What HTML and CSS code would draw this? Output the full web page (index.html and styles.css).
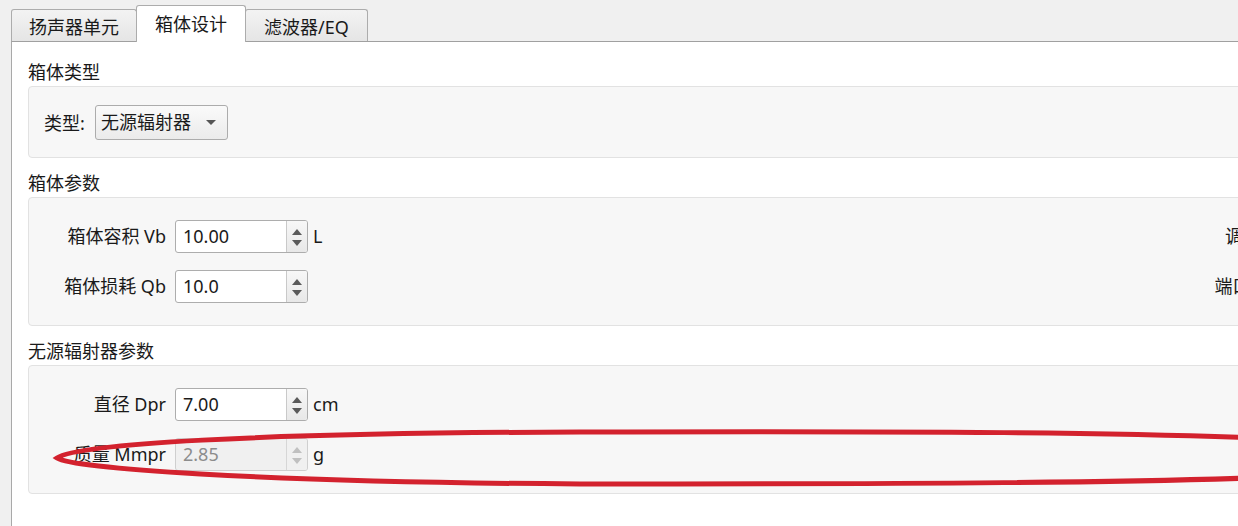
FILE: index.html
```html
<!DOCTYPE html>
<html lang="zh">
<head>
<meta charset="utf-8">
<title>箱体设计</title>
<link rel="stylesheet" href="styles.css">
</head>
<body>
<div class="app">
  <div class="tabs">
    <div class="tab">扬声器单元</div>
    <div class="tab active">箱体设计</div>
    <div class="tab wide">滤波器/EQ</div>
  </div>
  <div class="panel">
    <section class="sec">
      <div class="sec-title">箱体类型</div>
      <div class="group type-group">
        <span class="type-label">类型:</span>
        <div class="combo"><span class="combo-text">无源辐射器</span><span class="caret"></span></div>
      </div>
    </section>
    <section class="sec">
      <div class="sec-title">箱体参数</div>
      <div class="group form">
        <span class="lbl">箱体容积 Vb</span>
        <div class="spin"><span class="val">10.00</span><span class="btns"><i class="up"></i><i class="dn"></i></span></div>
        <span class="unit">L</span>
        <span class="lbl r">调谐频率 Fb</span>

        <span class="lbl">箱体损耗 Qb</span>
        <div class="spin"><span class="val">10.0</span><span class="btns"><i class="up"></i><i class="dn"></i></span></div>
        <span class="unit"></span>
        <span class="lbl r">端口直径 Dpt</span>
      </div>
    </section>
    <section class="sec">
      <div class="sec-title">无源辐射器参数</div>
      <div class="group form">
        <span class="lbl">直径 Dpr</span>
        <div class="spin"><span class="val">7.00</span><span class="btns"><i class="up"></i><i class="dn"></i></span></div>
        <span class="unit">cm</span>
        <span class="lbl r"></span>

        <span class="lbl">质量 Mmpr</span>
        <div class="spin disabled"><span class="val">2.85</span><span class="btns"><i class="up"></i><i class="dn"></i></span></div>
        <span class="unit">g</span>
        <span class="lbl r"></span>
      </div>
    </section>
  </div>
  <svg class="annot" width="1238" height="526" viewBox="0 0 1238 526">
    <path d="M57 458 C77 444, 250 433, 580 432 C900 431, 1150 432, 1300 440 C1400 450, 1400 470, 1300 476 C1150 483, 900 484, 580 484 C250 482, 72 468, 57 458 Z" fill="none" stroke="#d3222e" stroke-width="5"/>
  </svg>
</div>
</body>
</html>
```

FILE: styles.css
```css
html, body {
  margin: 0;
  padding: 0;
  width: 1238px;
  height: 526px;
  overflow: hidden;
  background: #f0f0f0;
  font-family: "Noto Sans", "Noto Sans CJK SC", sans-serif;
  color: #1a1a1a;
}

.app {
  position: relative;
  height: 526px;
}

.tabs {
  display: flex;
  align-items: flex-end;
  height: 41px;
  padding-left: 11px;
}

.tab {
  box-sizing: border-box;
  height: 32px;
  padding: 2px 17px 0;
  margin-right: -1px;
  border: 1px solid #acacac;
  border-bottom: none;
  border-radius: 3px 3px 0 0;
  background: linear-gradient(#f3f3f3, #e5e5e5);
  font-size: 18px;
  line-height: 30px;
  white-space: nowrap;
}

.tab.wide {
  padding: 2px 18px 0;
}

.tab.active {
  position: relative;
  z-index: 1;
  height: 37px;
  padding: 2px 18px 0;
  margin-bottom: -1px;
  background: #ffffff;
  line-height: 32px;
}

.panel {
  margin-left: 11px;
  height: 485px;
  box-sizing: border-box;
  border-left: 1px solid #a9a9a9;
  border-top: 1px solid #a0a0a0;
  background: #ffffff;
  padding: 17px 0 0 16px;
}

.sec + .sec {
  margin-top: 12px;
}

.sec-title {
  font-size: 18px;
  line-height: 26px;
  height: 26px;
}

.group {
  margin-top: 1px;
  width: 1400px;
  box-sizing: border-box;
  background: #f7f7f7;
  border: 1px solid #e2e2e2;
  border-radius: 4px;
}

.type-group {
  height: 72px;
  padding: 0 15px;
  display: flex;
  align-items: center;
  gap: 9px;
  font-size: 18px;
}

.type-label {
  width: 42px;
}

.combo {
  box-sizing: border-box;
  width: 133px;
  height: 35px;
  display: flex;
  align-items: center;
  padding-left: 5px;
  border: 1px solid #acacac;
  border-radius: 3px;
  background: linear-gradient(#fafafa, #ebebeb);
}

.combo-text {
  flex: 1;
  line-height: 33px;
}

.caret {
  width: 0;
  height: 0;
  margin-right: 11px;
  border-left: 5px solid transparent;
  border-right: 5px solid transparent;
  border-top: 5px solid #555555;
}

.form {
  padding: 22px 15px;
  display: grid;
  grid-template-columns: 131px 133px 893px 130px;
  row-gap: 17px;
  font-size: 18px;
}

.lbl {
  line-height: 33px;
  text-align: right;
  padding-right: 9px;
  white-space: nowrap;
}

.unit {
  line-height: 33px;
  padding-left: 5px;
}

.spin {
  box-sizing: border-box;
  width: 133px;
  height: 33px;
  display: flex;
  border: 1px solid #adadad;
  border-radius: 3px;
  background: #ffffff;
  overflow: hidden;
}

.val {
  flex: 1;
  padding-left: 7px;
  line-height: 31px;
}

.btns {
  width: 20px;
  border-left: 1px solid #c9c9c9;
  background: linear-gradient(#f7f7f7, #e8e8e8);
  display: flex;
  flex-direction: column;
  align-items: center;
  justify-content: center;
  gap: 5px;
  padding-top: 1px;
}

.btns i {
  display: block;
  width: 0;
  height: 0;
  border-left: 5px solid transparent;
  border-right: 5px solid transparent;
}

.btns .up {
  border-bottom: 6px solid #5a5a5a;
}

.btns .dn {
  border-top: 6px solid #5a5a5a;
}

.spin.disabled {
  background: #f0f0f0;
  border-color: #cfcfcf;
  color: #8c8c8c;
}

.spin.disabled .btns {
  background: #f0f0f0;
  border-left-color: #d6d6d6;
}

.spin.disabled .up {
  border-bottom-color: #c0c0c0;
}

.spin.disabled .dn {
  border-top-color: #c0c0c0;
}

.annot {
  position: absolute;
  left: 0;
  top: 0;
  pointer-events: none;
}
```
